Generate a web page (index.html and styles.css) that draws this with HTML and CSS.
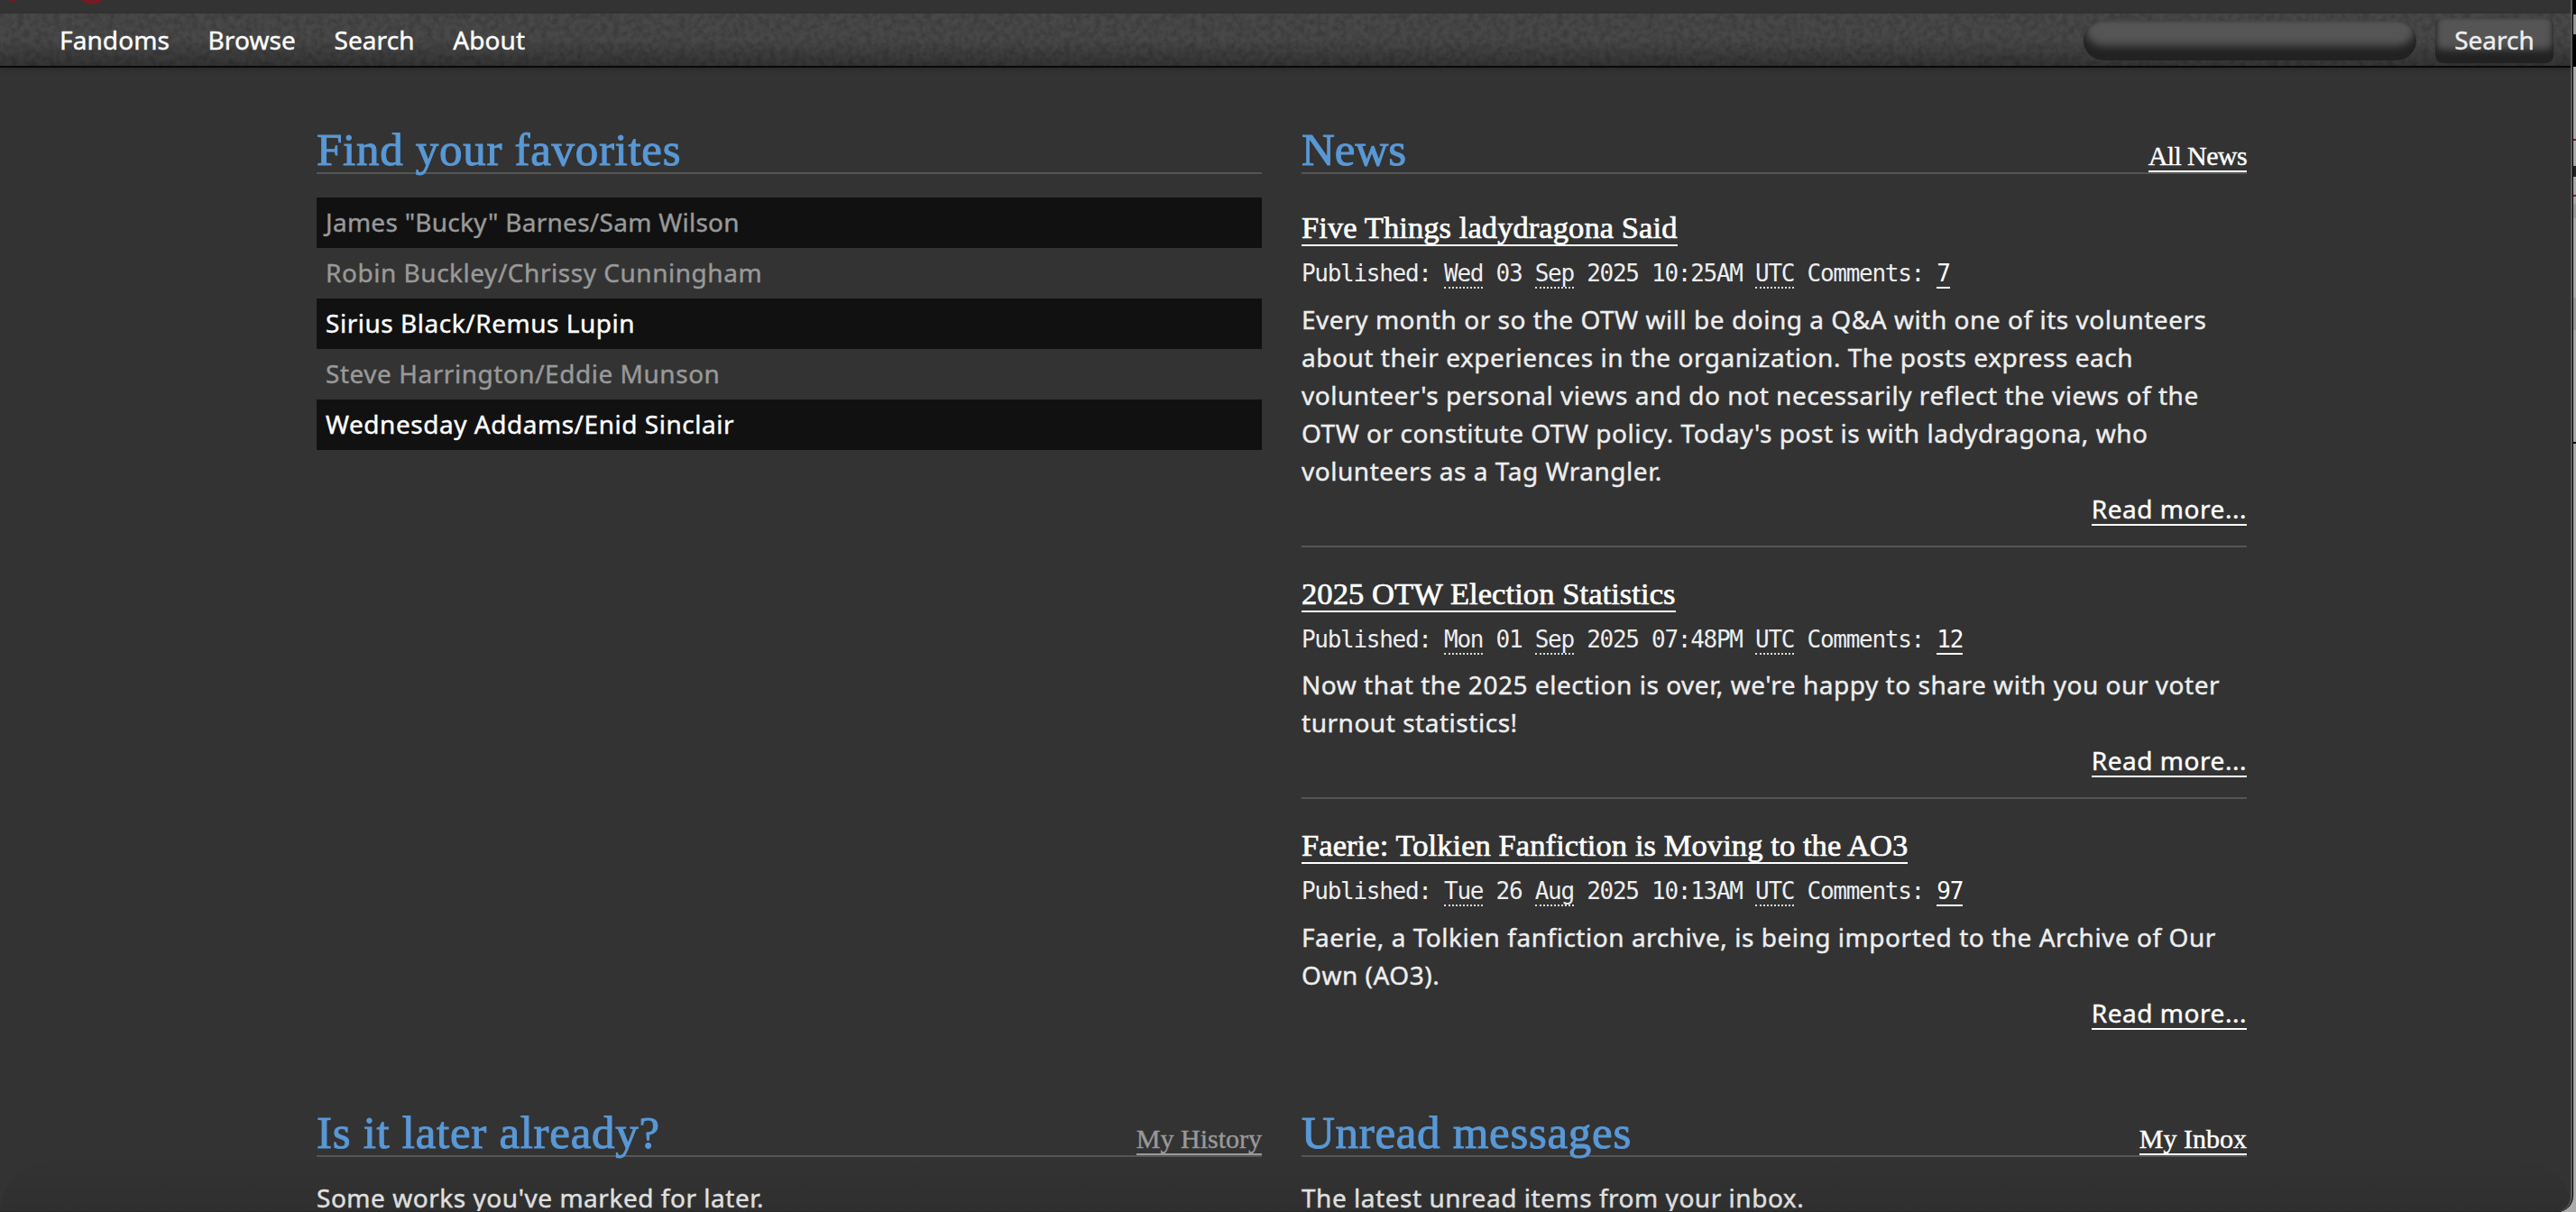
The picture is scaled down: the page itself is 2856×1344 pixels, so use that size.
FILE: index.html
```
<!DOCTYPE html>
<html lang="en">
<head>
    <meta charset="UTF-8">
    <meta name="viewport" content="width=device-width, initial-scale=1.0">
    <title>Archive Home</title>
    <link rel="stylesheet" href="styles.css">
</head>
<body>

    <div class="window">
        <header class="header">
            <svg class="logo" width="130" height="15" viewBox="0 0 130 15">
                <path d="M11 0h7l-1 1.5h-5z" fill="#7e1720"/>
                <path d="M89 -1Q102 10 115 -1L110 -2Q102 3 96 -2Z" fill="#7e1720"/>
            </svg>
            <div class="bar">
                <!-- grain over the bar -->
                <svg class="grain" width="2850" height="58">
                    <filter id="noise">
                        <feTurbulence type="fractalNoise" baseFrequency="0.15" numOctaves="3" seed="4"/>
                        <feColorMatrix type="matrix" values="0 0 0 0 0  0 0 0 0 0  0 0 0 0 0  1.3 0 0 0 -0.45"/>
                    </filter>
                    <rect width="2850" height="58" filter="url(#noise)"/>
                </svg>
                <nav class="nav">
                    <a href="#">Fandoms</a>
                    <a href="#">Browse</a>
                    <a href="#">Search</a>
                    <a href="#">About</a>
                </nav>
                <form class="search">
                    <input type="text" aria-label="Work Search">
                    <button type="button">Search</button>
                </form>
            </div>
        </header>

        <main class="main">
            <section class="module">
                <div class="heading">
                    <h2>Find your favorites</h2>
                </div>
                <ul class="favorites">
                    <li><a class="visited" href="#">James "Bucky" Barnes/Sam Wilson</a></li>
                    <li><a class="visited" href="#">Robin Buckley/Chrissy Cunningham</a></li>
                    <li><a href="#">Sirius Black/Remus Lupin</a></li>
                    <li><a class="visited" href="#">Steve Harrington/Eddie Munson</a></li>
                    <li><a href="#">Wednesday Addams/Enid Sinclair</a></li>
                </ul>
            </section>

            <section class="module">
                <div class="heading">
                    <h2 class="tight">News</h2>
                    <a class="all-news" href="#">All News</a>
                </div>
                <div class="news">
                    <article class="post">
                        <h3><a href="#">Five Things ladydragona Said</a></h3>
                        <p class="meta">Published: <abbr>Wed</abbr> 03 <abbr>Sep</abbr> 2025 10:25AM <abbr>UTC</abbr> Comments: <a href="#">7</a></p>
                        <p>Every month or so the OTW will be doing a Q&amp;A with one of its volunteers<br>
                        about their experiences in the organization. The posts express each<br>
                        volunteer's personal views and do not necessarily reflect the views of the<br>
                        OTW or constitute OTW policy. Today's post is with ladydragona, who<br>
                        volunteers as a Tag Wrangler.</p>
                        <p class="more"><a href="#">Read more...</a></p>
                    </article>
                    <article class="post">
                        <h3><a href="#">2025 OTW Election Statistics</a></h3>
                        <p class="meta">Published: <abbr>Mon</abbr> 01 <abbr>Sep</abbr> 2025 07:48PM <abbr>UTC</abbr> Comments: <a href="#">12</a></p>
                        <p>Now that the 2025 election is over, we're happy to share with you our voter<br>
                        turnout statistics!</p>
                        <p class="more"><a href="#">Read more...</a></p>
                    </article>
                    <article class="post">
                        <h3><a href="#">Faerie: Tolkien Fanfiction is Moving to the AO3</a></h3>
                        <p class="meta">Published: <abbr>Tue</abbr> 26 <abbr>Aug</abbr> 2025 10:13AM <abbr>UTC</abbr> Comments: <a href="#">97</a></p>
                        <p>Faerie, a Tolkien fanfiction archive, is being imported to the Archive of Our<br>
                        Own (AO3).</p>
                        <p class="more"><a href="#">Read more...</a></p>
                    </article>
                </div>
            </section>

            <section class="module">
                <div class="heading">
                    <h2>Is it later already?</h2>
                    <a class="visited" href="#">My History</a>
                </div>
                <p class="note">Some works you've marked for later.</p>
            </section>

            <section class="module">
                <div class="heading">
                    <h2>Unread messages</h2>
                    <a href="#">My Inbox</a>
                </div>
                <p class="note">The latest unread items from your inbox.</p>
            </section>
        </main>
        <div class="shade"></div>
    </div>
    <div class="behind"></div>

</body>
</html>
```
FILE: styles.css
```
* {
    box-sizing: border-box;
}
body {
    display: flex;
    margin: 0;
    height: 1344px;
    overflow: hidden;
    background: #aaa;
    color: #eee;
    font: 28px/42px "Noto Sans", sans-serif;
    letter-spacing: 0.53px;
    -webkit-text-stroke: 0.4px;
}
h2, h3, p, ul {
    margin: 0;
    padding: 0;
    font-weight: normal;
}
a {
    color: #fff;
    text-decoration: none;
}
a.visited {
    color: #999;
}

/* window */
.window {
    position: relative;
    width: 2853px;
    height: 1344px;
    overflow: hidden;
    background: #333;
    border-right: 1px solid #000;
    border-bottom-right-radius: 18px;
    box-shadow: inset -2px 0 #5c5c5c;
}
.behind {
    flex: 1;
    background:
        linear-gradient(#999, #999) 0 16px / 3px 22px no-repeat,
        linear-gradient(#000, #000) 0 0 / 3px 74px no-repeat,
        linear-gradient(#8b1a22, #8b1a22) 0 154px / 3px 2px no-repeat,
        linear-gradient(#222, #222) 0 184px / 3px 12px no-repeat,
        linear-gradient(#8b1a22, #8b1a22) 0 216px / 3px 2px no-repeat,
        linear-gradient(#999, #999) 0 226px / 3px 16px no-repeat,
        linear-gradient(#999, #999) 0 330px / 3px 36px no-repeat,
        linear-gradient(#111, #111) 0 490px / 3px 2px no-repeat,
        #aaa;
}

/* header */
.header {
    width: 2850px;
}
.logo {
    display: block;
}
.bar {
    position: relative;
    display: flex;
    justify-content: space-between;
    height: 60px;
    padding: 0 19px 0 66px;
    background: linear-gradient(#484848, #484848 50%, #343434);
    border-bottom: 2px solid #080808;
    box-shadow: 0 2px 5px rgba(0, 0, 0, 0.2);
}
.grain {
    position: absolute;
    top: 0;
    left: 0;
    opacity: 0.28;
}
.nav {
    position: relative;
    display: flex;
    gap: 42.5px;
    line-height: 58px;
    letter-spacing: 0.1px;
}
.search {
    position: relative;
    display: flex;
    align-items: flex-start;
    gap: 21px;
}
.search input {
    width: 369px;
    height: 44px;
    margin-top: 8px;
    border: 0;
    border-radius: 22px;
    background: #555;
    box-shadow: inset 0 -16px 10px #222, inset 0 0 4px #333;
}
.search button {
    width: 131px;
    height: 50px;
    margin-top: 5px;
    padding: 0 0 1px;
    border: 0;
    border-radius: 8px;
    background: #555;
    box-shadow: inset 0 -15px 8px #222, inset 0 0 4px #333;
    color: #eee;
    font: 28px/49px "Noto Sans", sans-serif;
}

/* columns */
.main {
    display: grid;
    grid-template-columns: 1048px 1048px;
    gap: 66.5px 44px;
    padding: 65px 0 0 351px;
}
.heading {
    display: flex;
    align-items: baseline;
    justify-content: space-between;
    height: 53px;
    border-bottom: 2px solid #555;
    font-family: "Liberation Serif", serif;
    letter-spacing: 0;
}
.heading h2 {
    color: #5998d6;
    font-size: 51px;
    line-height: 53px;
    letter-spacing: 0.7px;
    -webkit-text-stroke: 1px;
}
.heading h2.tight {
    letter-spacing: 0;
}
.heading a {
    font-size: 30px;
    line-height: 33px;
    border-bottom: 2px solid;
}
.heading .all-news {
    letter-spacing: -0.6px;
}

/* favorites */
.favorites {
    margin-top: 26px;
    list-style: none;
}
.favorites li {
    height: 56px;
    padding: 0 10px;
    line-height: 54px;
}
.favorites li:first-child {
    letter-spacing: 0.27px;
}
.favorites li:nth-child(odd) {
    background: #111;
}

/* news */
.news {
    margin-top: 38px;
}
.post {
    padding-bottom: 20px;
}
.post + .post {
    margin-top: 30px;
}
.post:not(:last-child) {
    border-bottom: 2px solid #555;
}
.post h3 {
    font: 34.5px/42px "Liberation Serif", serif;
    letter-spacing: 0.08px;
    -webkit-text-stroke: 0.7px;
}
.post a {
    border-bottom: 2px solid;
}
.post .meta {
    margin: 9px 0 8.5px;
    font: 26px/42px "DejaVu Sans Mono", monospace;
    letter-spacing: -1.28px;
    -webkit-text-stroke: 0;
}
.meta abbr {
    display: inline-block;
    line-height: 29px;
    border-bottom: 2px dotted #ddd;
}
.post .more {
    text-align: right;
}
.more a {
    display: inline-block;
    line-height: 37px;
    height: 37px;
}
.note {
    margin-top: 24px;
}

/* fades the foot of the window */
.shade {
    position: absolute;
    left: 0;
    right: 0;
    bottom: 0;
    height: 57px;
    border-radius: 110px 110px 0 0;
    background: linear-gradient(rgba(0, 0, 0, 0.01), rgba(0, 0, 0, 0.08));
    border-bottom: 1px solid #262626;
}
```
